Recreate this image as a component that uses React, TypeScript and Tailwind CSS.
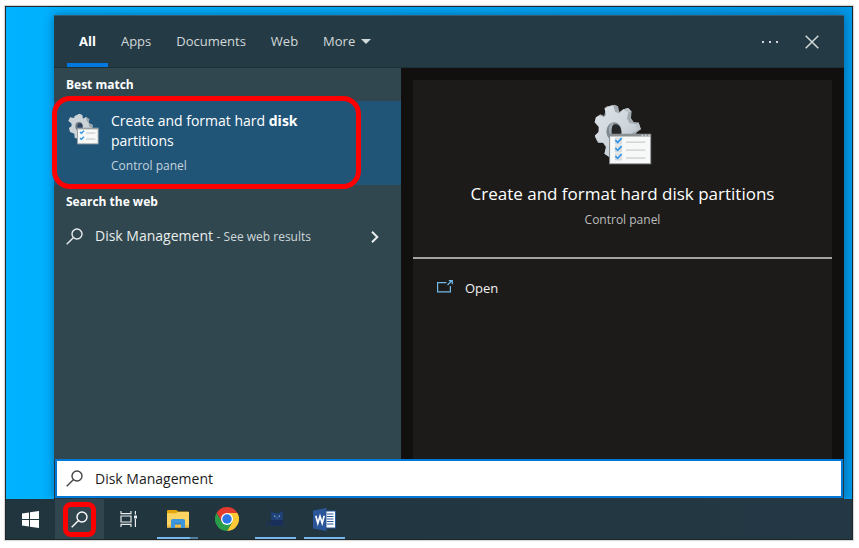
import type { ReactNode } from "react";

function GearChecklist({ className }: { className: string }) {
  return (
    <svg viewBox="103 42 174 184" className={className} aria-hidden="true">
      <defs>
        <linearGradient id="gearFace" x1="0" y1="0" x2="1" y2="1">
          <stop offset="0" stopColor="#dde3e8" />
          <stop offset="0.55" stopColor="#cfd6dc" />
          <stop offset="1" stopColor="#aeb8c0" />
        </linearGradient>
      </defs>
      <path
        d="M140 50 165 44 175 49 179 66 191 58 206 54 216 65 214 84 222 96 237 98 244 118 232 127 220 150 160 202 150 202 134 192 138 172 130 160 115 160 105 140 116 128 117 112 104 97 108 82 122 73 133 78Z"
        fill="#a3abb1"
      />
      <path
        d="M134 55 160 46 166 65 178 71 191 58 206 68 202 86 209 99 229 103 234 122 220 128 205 150 160 200 148 202 134 192 140 171 130 158 113 154 105 137 117 126 117 110 105 96 109 82 120 77 134 82 139 74Z"
        fill="url(#gearFace)"
      />
      <path d="M191 58 206 54 216 65 206 68ZM229 103 237 98 244 118 234 122ZM134 55 160 46 165 44 140 50Z" fill="#bcc3c8" />
      <ellipse cx="163" cy="125" rx="23" ry="28" fill="#7c868e" />
      <ellipse cx="168" cy="127" rx="17" ry="24" fill="#262728" />
      <path d="M163 97c-12 3-16 14-15 25 1 10 5 17 11 23-5-17-5-33 4-48Z" fill="#a4adb4" />
      <path d="M148 132h127v92H148z" fill="#8a8f92" />
      <path d="M151 140h121v81H151z" fill="#f7f8f8" />
      <path d="M246 135h5v3h-5zM256 135h5v3h-5zM266 135h5v3h-5z" fill="#e8e8e8" />
      <path d="M167 145h18v18h-18zM167 169h18v18h-18zM167 193h18v18h-18z" fill="#e5e7e9" stroke="#b9bdc0" strokeWidth="1.5" />
      <path d="m167 151 7 7 12-13M167 175l7 7 12-13M167 199l7 7 12-13" fill="none" stroke="#2f93e6" strokeWidth="5" />
      <path d="M199 157h58M199 181h58M199 205h58" stroke="#bfc1c2" strokeWidth="3" />
    </svg>
  );
}

function GearChecklistSmall({ className }: { className: string }) {
  return (
    <svg viewBox="0 0 93 96" className={className} aria-hidden="true">
      <path
        d="M20 9 34 2 43 6 45 17 54 12 64 19 62 30 74 36 73 46 30 78 20 74 19 62 6 57 3 45 11 39 10 31 1 24 6 13 18 15Z"
        fill="#ccd4da"
      />
      <path d="M54 12 64 19 62 30 56 24ZM62 30 74 36 73 46 63 40Z" fill="#9aa5ad" />
      <ellipse cx="33" cy="40" rx="11" ry="13" fill="#6f7a82" />
      <ellipse cx="36" cy="41" rx="8" ry="10" fill="#2b4660" />
      <path d="M27 44h65v50H27z" fill="#9a9fa2" />
      <path d="M30 49h59v42H30z" fill="#f7f8f8" />
      <path d="m36 57 4 4 8-8M36 75l4 4 8-8" fill="none" stroke="#2f93e6" strokeWidth="4" />
      <path d="M54 60h28M54 78h28" stroke="#bfc1c2" strokeWidth="3" />
    </svg>
  );
}

function SearchGlyph({ className }: { className: string }) {
  return (
    <svg viewBox="0 0 17 17" className={className} fill="none" stroke="currentColor" strokeWidth="1.4" aria-hidden="true">
      <circle cx="11" cy="6" r="5" />
      <path d="M7.3 9.7.7 16.3" />
    </svg>
  );
}

function WindowsLogo() {
  return (
    <svg viewBox="0 0 17 17" className="size-[17px]" fill="#fff" aria-hidden="true">
      <path d="M0 2.4 7 1.4V8H0zM8 1.2 17 0v8H8zM0 9h7v6.6l-7-1zM8 9h9v8l-9-1.2z" />
    </svg>
  );
}

function TaskView() {
  return (
    <svg viewBox="0 0 17 16" className="h-4 w-[17px]" fill="none" stroke="#e9edef" strokeWidth="1.2" aria-hidden="true">
      <path d="M1 0v2.6h10V0M1 16v-2.6h10V16M1 5h10v6H1zM15.4 0v3.5M15.4 8v8" />
      <path d="M14 4.5h3v3h-3z" fill="#e9edef" stroke="none" />
    </svg>
  );
}

function Explorer() {
  return (
    <svg viewBox="0 0 22 18" className="h-[18px] w-[22px]" aria-hidden="true">
      <path d="M0 1a1 1 0 0 1 1-1h8.500l1.500 1.500h10a1 1 0 0 1 1 1V5H0z" fill="#e5a50c" />
      <path d="M0 3.200h9L10.500 2H22v15.500H0z" fill="#fcd462" />
      <path d="M0 15h22v2.500H0z" fill="#f2c04a" />
      <path d="M4 18v-7.500A1.500 1.500 0 0 1 5.500 9h11a1.500 1.500 0 0 1 1.500 1.500V18h-4v-4H8v4z" fill="#3d96dc" />
      <path d="M8 13.500h6v1H8z" fill="#1c6db5" />
    </svg>
  );
}

function Chrome() {
  return (
    <svg viewBox="0 0 48 48" className="size-6" aria-hidden="true">
      <path d="M24 12h20.800A24 24 0 0 0 3.200 12l10.400 18z" fill="#e33b2e" />
      <path d="M34.400 30 24 48A24 24 0 0 0 44.800 12H24z" fill="#fcc934" />
      <path d="M13.600 30 3.200 12A24 24 0 0 0 24 48l10.400-18z" fill="#2a9d4b" />
      <circle cx="24" cy="24" r="12" fill="#fff" />
      <circle cx="24" cy="24" r="9.500" fill="#2b77e8" />
    </svg>
  );
}

function Cat() {
  return (
    <svg viewBox="0 0 17 16" className="mb-0.5 h-4 w-[17px]" aria-hidden="true">
      <path d="M4.500 15H2Q.3 15 .5 13q.2-1.800 1.300-2.500" fill="none" stroke="#19335f" strokeWidth="1.200" />
      <path d="M4.200.3 7.200 3h5.600L15.800.3V9l.7 6.500H3.500L4.200 9z" fill="#1f4379" />
      <path d="M4.100 10h11.800l.6 5.500h-13z" fill="#182f5a" />
      <path d="M7 5.500h1.300v1.300H7zM11.700 5.500H13v1.300h-1.300zM9.500 7.500h1v.8h-1z" fill="#9ab6d3" />
    </svg>
  );
}

function Word() {
  return (
    <svg viewBox="0 0 23 23" className="size-[23px]" aria-hidden="true">
      <path d="M12 3h10.500v17H12z" fill="#fff" stroke="#2b579a" />
      <path d="M14 6h6.500M14 8.500h6.500M14 11h6.500M14 13.500h6.500M14 16h6.500" stroke="#2b579a" strokeWidth="1.100" />
      <path d="M0 2.500 13.500 0v23L0 20.500z" fill="#2a5699" />
      <path d="m2.800 7.800 2 7.500 2.200-7 2.200 7 2-7.500" fill="none" stroke="#fff" strokeWidth="1.700" />
    </svg>
  );
}

type TaskProps = { label: string; children: ReactNode; running?: boolean; grouped?: boolean; active?: boolean; marked?: boolean };

function TaskButton({ label, children, running, grouped, active, marked }: TaskProps) {
  return (
    <button
      type="button"
      aria-label={label}
      className={`relative flex w-[49px] items-center justify-center ${active ? "bg-[#31454e]" : ""}`}
    >
      {children}
      {running && (
        <span className="absolute inset-x-1 bottom-0 flex h-0.5 bg-[#76b9ed]">
          {grouped && <span className="ml-auto w-2 bg-[#527f9f]" />}
        </span>
      )}
      {marked && <span className="absolute inset-x-2 top-[3px] bottom-0.5 rounded-lg border-[5px] border-[#ff0000]" />}
    </button>
  );
}

const tabs = ["Apps", "Documents", "Web"];

export default function App() {
  return (
    <div className="flex min-h-screen bg-white pt-1.5 pr-1.5 pb-2 pl-[5px] font-['Open_Sans','Noto_Sans',sans-serif] text-[13px]">
      <div className="flex flex-1 flex-col border border-[#20272b] bg-linear-to-r from-[#00b2ff] to-[#0099e8] shadow-[0_0_1px_1px_#d8d8d8]">
        <main className="mt-2 mr-2 ml-12 flex flex-1 flex-col bg-[#243b45] shadow-[0_0_10px_rgba(0,30,70,0.45)]">
          <header className="flex h-[53px] items-stretch border-b border-[#1c3038] border-t border-t-[#38596a] pl-[13px] text-[#d3d8da]">
            <nav className="flex flex-1" aria-label="Search filters">
              <button type="button" className="border-b-4 border-[#0078e0] px-3 pt-1 font-bold text-white">
                All
              </button>
              {tabs.map((tab) => (
                <button key={tab} type="button" className="pr-3 pl-[13px]">
                  {tab}
                </button>
              ))}
              <button type="button" className="flex items-center gap-1.5 px-[13px]">
                More
                <svg viewBox="0 0 10 5" className="h-[5px] w-2.5" fill="currentColor" aria-hidden="true">
                  <path d="M0 0h10L5 5z" />
                </svg>
              </button>
            </nav>
            <button type="button" aria-label="Options" className="px-3">
              <svg viewBox="0 0 16 2" className="h-0.5 w-4" fill="currentColor" aria-hidden="true">
                <path d="M0 0h2v2H0zM7 0h2v2H7zM14 0h2v2h-2z" />
              </svg>
            </button>
            <button type="button" aria-label="Close" className="mr-2.5 px-[15px]">
              <svg viewBox="0 0 14 14" className="size-3.5" fill="none" stroke="currentColor" strokeWidth="1.5" aria-hidden="true">
                <path d="m.7.7 12.600 12.600M13.300.7.7 13.300" />
              </svg>
            </button>
          </header>

          <div className="flex flex-1">
            <section className="w-[347px] shrink-0 bg-[#30474f] text-white">
              <h2 className="px-3 pt-[7px] pb-1.5 text-[12px] leading-5 font-bold">Best match</h2>
              <button type="button" className="relative flex w-full gap-3 bg-[#205578] px-3.5 pt-2.5 pb-[9px] text-left">
                <GearChecklistSmall className="mt-0.5 h-8 w-[31px] shrink-0" />
                <span className="w-56">
                  <span className="block text-[14px] leading-5">
                    Create and format hard <b>disk</b> partitions
                  </span>
                  <span className="mt-[5px] block text-[12px] leading-5 text-[#c5d3de]">Control panel</span>
                </span>
                <span className="absolute -top-[5px] right-10 -bottom-1 -left-0.5 rounded-[18px] border-[5px] border-[#ff0000]" />
              </button>
              <h2 className="px-3 pt-[7px] pb-1.5 text-[12px] leading-5 font-bold">Search the web</h2>
              <button type="button" className="flex w-full items-center px-3 pt-1.5 text-left text-[#e9eded]">
                <SearchGlyph className="mr-3 size-[17px]" />
                <span className="flex-1 text-[14px] leading-6">
                  Disk Management <span className="text-[12px] text-[#cfd6d8]">- See web results</span>
                </span>
                <svg viewBox="0 0 8 12" className="mr-2.5 h-3 w-2" fill="none" stroke="currentColor" strokeWidth="2" aria-hidden="true">
                  <path d="m1 .8 5.300 5.200L1 11.200" />
                </svg>
              </button>
            </section>

            <section className="flex flex-1 bg-[#11100e] px-3 pt-3 text-white">
              <div className="flex-1 bg-[#1c1b19]">
                <div className="flex flex-col items-center border-b-2 border-[#a3a3a3] pt-6 pb-[27px]">
                  <GearChecklist className="h-[61px] w-[58px]" />
                  <h1 className="mt-[17px] text-[17px] leading-6">Create and format hard disk partitions</h1>
                  <p className="mt-1 text-[12px] leading-5 text-[#bdbdbd]">Control panel</p>
                </div>
                <button type="button" className="flex items-center gap-3 px-6 pt-5 pb-4 text-[#f1f1f1]">
                  <svg viewBox="0 0 16 13" className="mb-1 h-[13px] w-4" fill="none" stroke="#72b9e8" strokeWidth="1.2" aria-hidden="true">
                    <path d="M9.500 2.600H.6v9.300h12.800V6M10.500 5 14.500 1M11.800.7h3.500v3.500" />
                  </svg>
                  Open
                </button>
              </div>
            </section>
          </div>

          <label className="mx-px mb-px flex h-[39px] items-center gap-3 border-2 border-[#0078d7] bg-white pl-[9px] text-[#444]">
            <SearchGlyph className="size-[17px] shrink-0" />
            <input
              type="text"
              aria-label="Search"
              defaultValue="Disk Management"
              className="min-w-0 flex-1 bg-transparent text-[14px] text-[#1c1c1c] outline-none"
            />
          </label>
        </main>

        <footer className="flex h-10 bg-linear-to-r from-[#20353d] to-[#233844]">
          <TaskButton label="Start"><WindowsLogo /></TaskButton>
          <TaskButton label="Search" active marked><SearchGlyph className="size-[17px] text-white" /></TaskButton>
          <TaskButton label="Task View"><TaskView /></TaskButton>
          <TaskButton label="File Explorer" running grouped><Explorer /></TaskButton>
          <TaskButton label="Chrome"><Chrome /></TaskButton>
          <TaskButton label="Cat" running><Cat /></TaskButton>
          <TaskButton label="Word" running><Word /></TaskButton>
        </footer>
      </div>
    </div>
  );
}
